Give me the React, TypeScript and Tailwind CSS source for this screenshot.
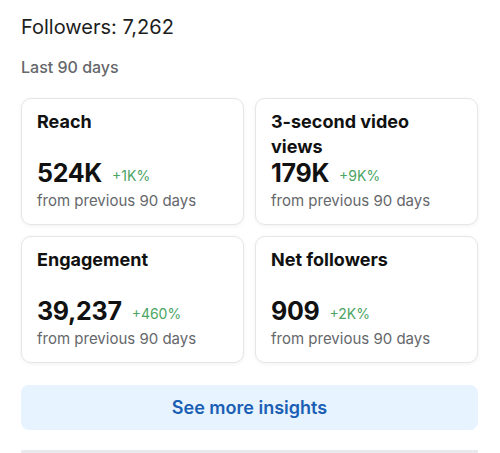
const stats = [
  { title: "Reach", value: "524K", change: "+1K%" },
  { title: "3-second video views", value: "179K", change: "+9K%" },
  { title: "Engagement", value: "39,237", change: "+460%" },
  { title: "Net followers", value: "909", change: "+2K%" },
];

const StatCard = ({ title, value, change }: { title: string; value: string; change: string }) => {
  return (
    <div className="h-[127px] rounded-[10px] border border-[#e6e6e8] bg-white px-[15px] pt-[10px] shadow-[0_1px_4px_rgba(0,0,0,0.06)]">
      <h3 className="h-[50px] text-[18px] font-bold leading-[25px] text-[#111]">{title}</h3>
      <div className="flex h-[29px] items-center">
        <span className="text-[25px] font-bold tracking-[-0.3px] text-[#111]">{value}</span>
        <span className="ml-[10px] mt-[3px] text-[14px] text-[#4aa564]">{change}</span>
      </div>
      <p className="mt-[2px] text-[15px] leading-[22px] text-[#65676b]">from previous 90 days</p>
    </div>
  );
};

const App = () => {
  return (
    <main className="h-[453px] w-[500px] overflow-hidden bg-white pl-[21px] pr-[22px] pt-[13px] font-['Inter','Liberation_Sans',sans-serif]">
      {/* Header */}
      <h1 className="text-[20px] leading-[28px] text-[#1c1e21]">Followers: 7,262</h1>
      <p className="mt-[16px] text-[16px] font-medium leading-[20px] text-[#65676b]">Last 90 days</p>

      {/* Stats grid */}
      <section className="mt-[21px] grid grid-cols-2 gap-[11px]">
        {stats.map((s) => (
          <StatCard key={s.title} {...s} />
        ))}
      </section>

      {/* Insights button */}
      <button className="mt-[22px] flex h-[45px] w-full items-center justify-center rounded-[8px] bg-[#e7f3ff] text-[18px] font-semibold text-[#1a5fb4]">
        See more insights
      </button>
      <div className="mt-[20px] h-[3px] bg-[#e9eaed]"></div>
    </main>
  );
};

export default App;
